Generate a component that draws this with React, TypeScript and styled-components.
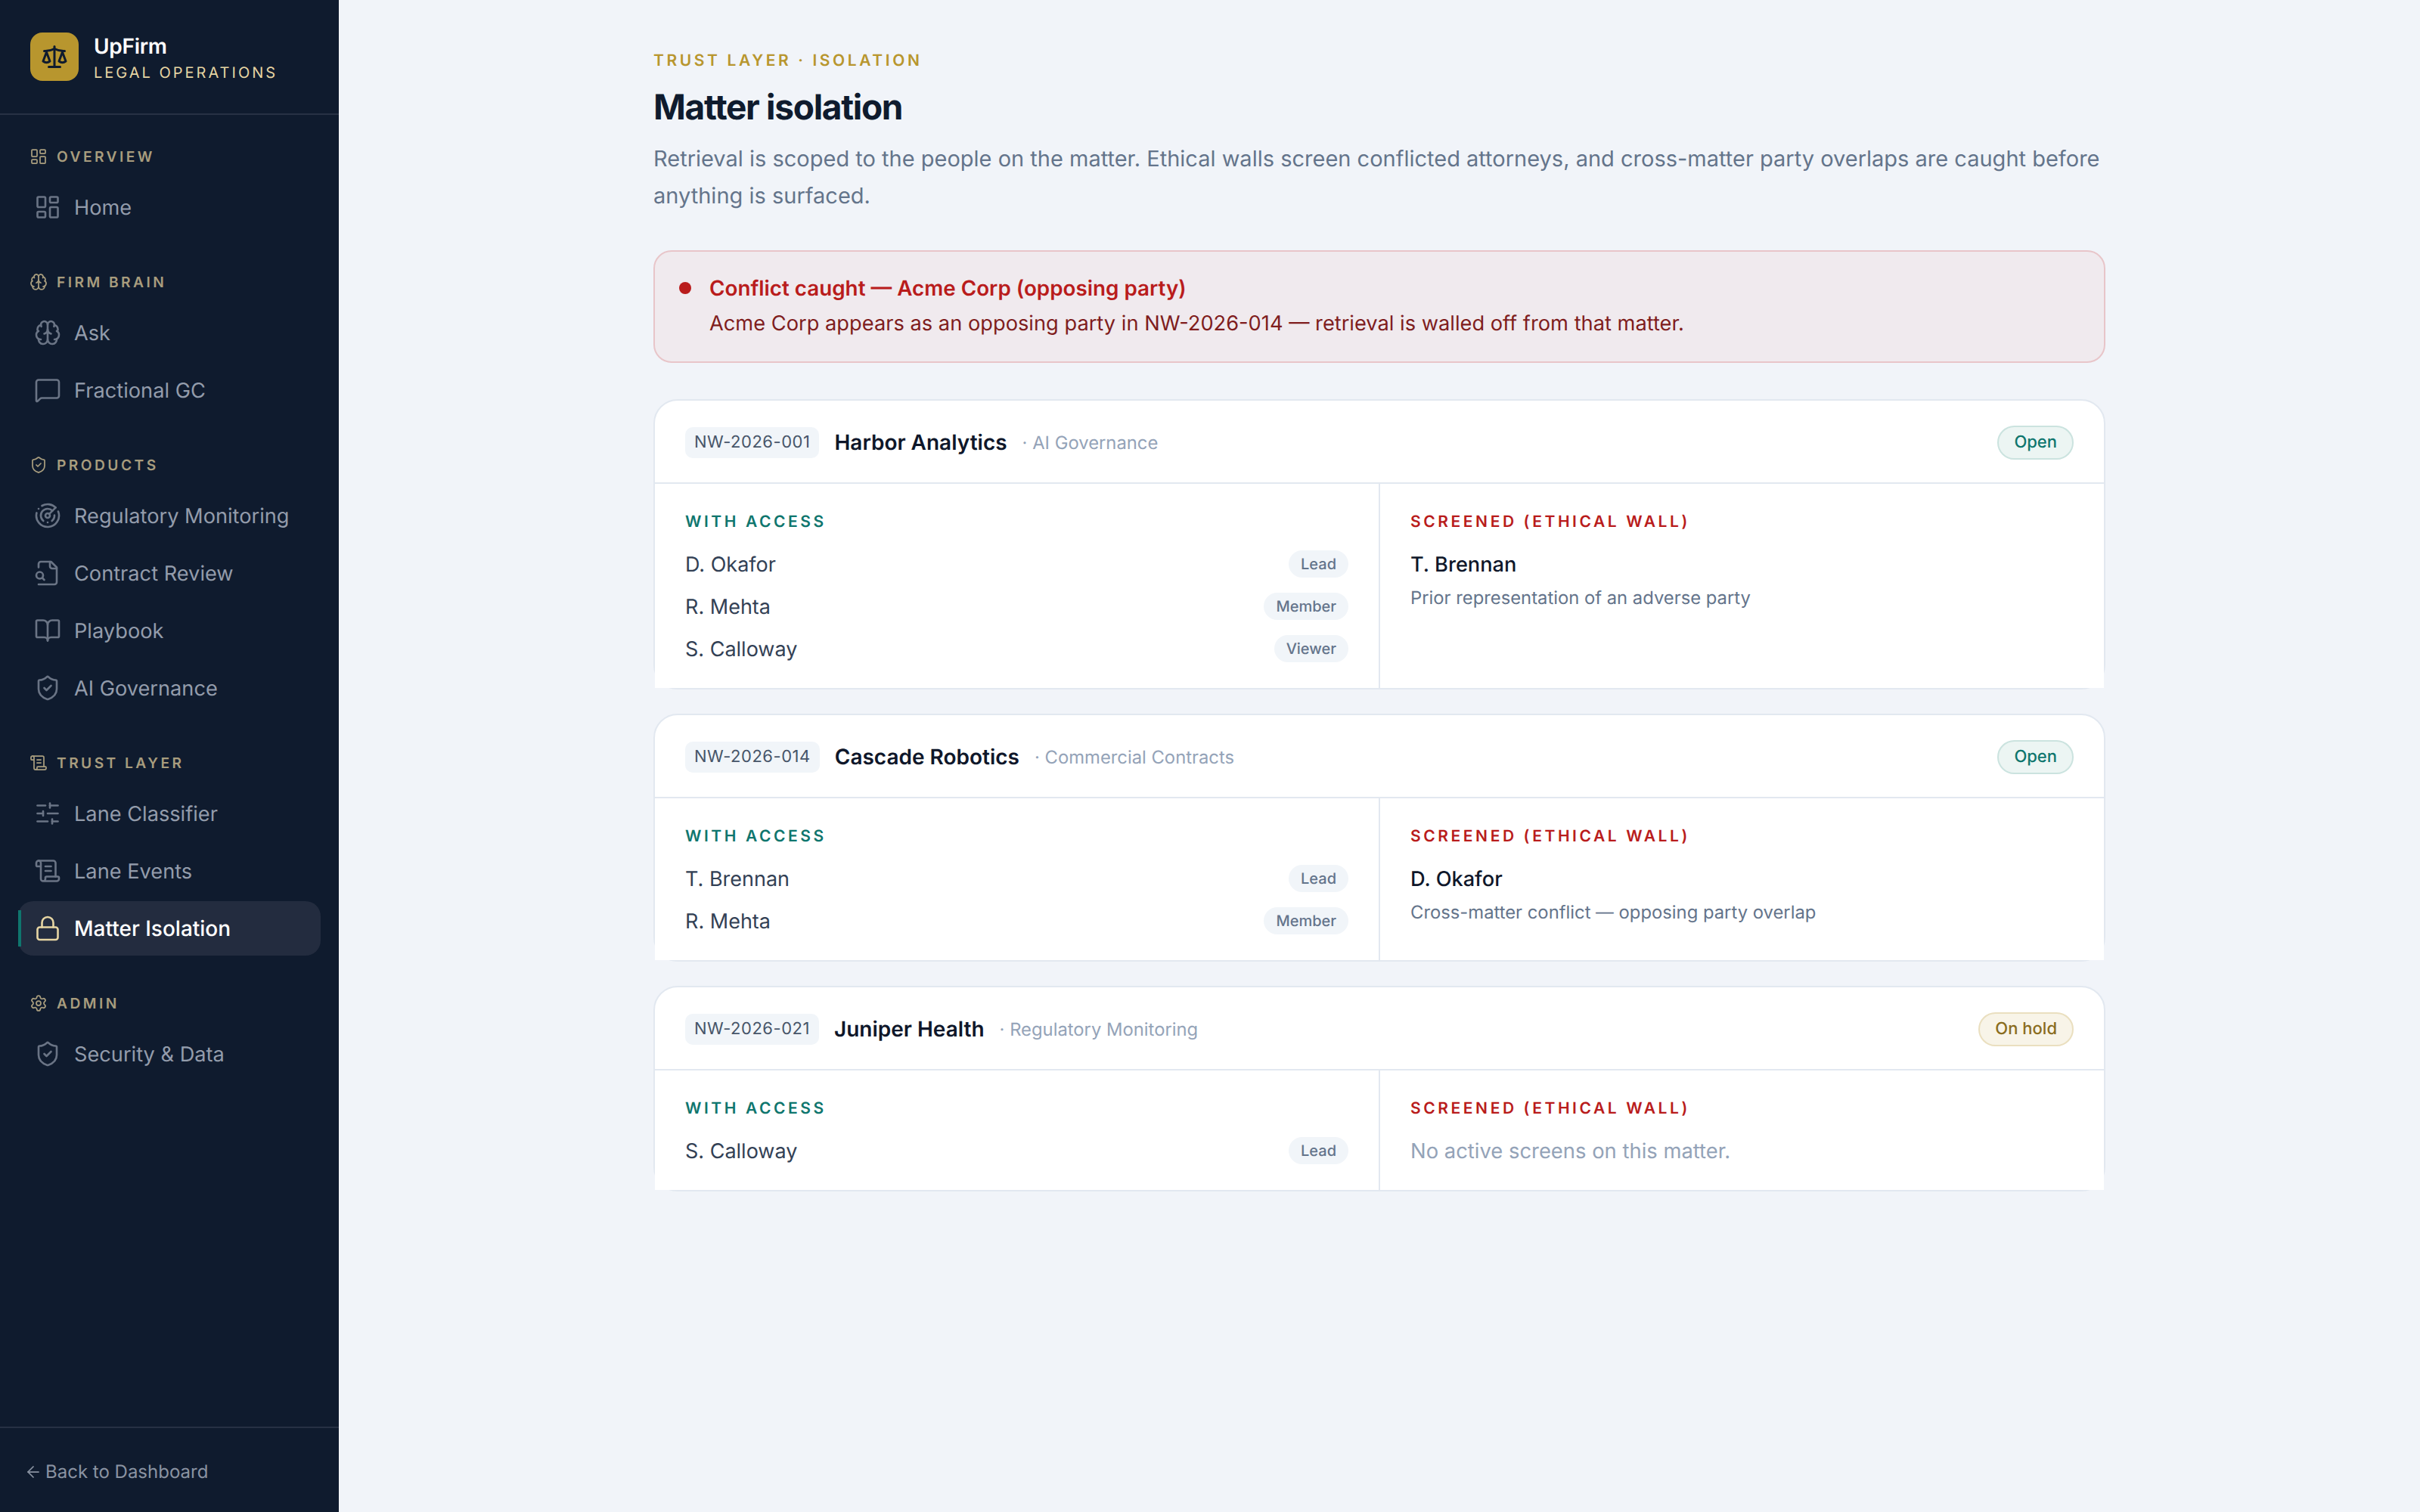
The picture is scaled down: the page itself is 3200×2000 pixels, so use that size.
import React from "react";
import styled, { createGlobalStyle } from "styled-components";
import {
  ArrowLeft,
  BookOpen,
  Brain,
  LayoutDashboard,
  Lock,
  MessageSquare,
  Radar,
  Scale,
  ScrollText,
  Settings,
  ShieldCheck,
  SlidersHorizontal,
} from "lucide-react";

const Global = createGlobalStyle`
  html, body { margin: 0; padding: 0; background: #f1f4f9; }
  body {
    font-family: Inter, "Liberation Sans", sans-serif;
    text-rendering: geometricPrecision;
    -webkit-font-smoothing: antialiased;
  }
  * { box-sizing: border-box; }
`;

const Shell = styled.div`
  display: flex;
  width: 3200px;
  height: 2000px;
  overflow: hidden;
`;

const Sidebar = styled.aside`
  width: 448px;
  flex: none;
  display: flex;
  flex-direction: column;
  background: #0f1b2e;
`;

const Brand = styled.div`
  height: 152px;
  display: flex;
  align-items: flex-start;
  gap: 20px;
  padding: 43px 40px 0;
  border-bottom: 2px solid #273144;
`;

const LogoMark = styled.div`
  width: 64px;
  height: 64px;
  flex: none;
  display: flex;
  align-items: center;
  justify-content: center;
  border-radius: 16px;
  background: #b8962e;
  color: #0f1b2e;
`;

const BrandText = styled.div`
  display: flex;
  flex-direction: column;
  padding-top: 1px;
`;

const BrandName = styled.div`
  font-size: 28px;
  line-height: 34px;
  font-weight: 600;
  color: #ffffff;
  letter-spacing: -0.28px;
`;

const BrandSub = styled.div`
  margin-top: 5px;
  font-size: 20px;
  line-height: 26px;
  letter-spacing: 3px;
  color: #e6d5a3;
`;

const Nav = styled.nav`
  flex: 1;
  display: flex;
  flex-direction: column;
  gap: 48px;
  padding: 40px 24px 0;
`;

const NavSection = styled.section`
  display: flex;
  flex-direction: column;
  gap: 4px;
`;

const SectionLabel = styled.div`
  height: 42px;
  padding: 0 0 12px 15px;
  display: flex;
  align-items: center;
  gap: 12px;
  font-size: 19.2px;
  font-weight: 600;
  letter-spacing: 3.46px;
  color: #a89d7e;
`;

const NavItem = styled.a<{ $active?: boolean }>`
  position: relative;
  height: 72px;
  display: flex;
  align-items: center;
  gap: 17px;
  padding-left: 21px;
  border-radius: 20px;
  font-size: ${(p) => (p.$active ? "28px" : "27.2px")};
  font-weight: ${(p) => (p.$active ? 500 : 400)};
  color: ${(p) => (p.$active ? "#ffffff" : "#939cab")};
  background: ${(p) => (p.$active ? "#232c3f" : "transparent")};

  svg {
    color: ${(p) => (p.$active ? "#e6d5a3" : "#6a7485")};
    flex: none;
  }
`;

const ActiveBar = styled.span`
  position: absolute;
  left: 0;
  top: 12px;
  width: 4px;
  height: 48px;
  background: #0f766e;
`;

const SidebarFoot = styled.div`
  height: 113px;
  border-top: 2px solid #273144;
  display: flex;
  align-items: center;
  gap: 4px;
  padding: 4px 0 0 32px;
  font-size: 24px;
  color: #8a93a2;
`;

const Main = styled.main`
  flex: 1;
  display: flex;
  justify-content: center;
  padding-top: 65px;
`;

const Content = styled.div`
  width: 1920px;
  display: flex;
  flex-direction: column;
`;

const Eyebrow = styled.div`
  font-size: 21px;
  line-height: 32px;
  font-weight: 600;
  letter-spacing: 3.6px;
  color: #b8962e;
`;

const Title = styled.h1`
  margin: 17px 0 0;
  font-size: 46px;
  line-height: 56px;
  font-weight: 700;
  letter-spacing: -1.3px;
  color: #0f1b2e;
`;

const Lead = styled.p`
  margin: 15px 0 0;
  font-size: 29px;
  line-height: 49px;
  color: #64748b;
`;

const Alert = styled.div`
  margin-top: 48px;
  height: 149px;
  display: flex;
  gap: 24px;
  padding: 28px 32px;
  border: 2px solid #e8c5c9;
  border-radius: 24px;
  background: #f0eaee;
`;

const AlertDot = styled.span`
  width: 16px;
  height: 16px;
  margin-top: 12px;
  flex: none;
  border-radius: 50%;
  background: #b91c1c;
`;

const AlertText = styled.div`
  display: flex;
  flex-direction: column;
  gap: 7px;
`;

const AlertTitle = styled.div`
  font-size: 27.8px;
  line-height: 40px;
  font-weight: 600;
  color: #b91c1c;
`;

const AlertBody = styled.div`
  font-size: 27.25px;
  line-height: 40px;
  color: #7f1d1d;
`;

const Cards = styled.div`
  margin-top: 48px;
  display: flex;
  flex-direction: column;
  gap: 32px;
`;

const Card = styled.article`
  border: 2px solid #e2e8f0;
  border-radius: 32px;
  background: #ffffff;
`;

const CardHead = styled.header`
  height: 110px;
  display: flex;
  align-items: center;
  padding: 2px 40px 0;
  border-bottom: 2px solid #e2e8f0;
`;

const MatterId = styled.span`
  height: 41px;
  display: flex;
  align-items: center;
  padding: 0 12px;
  border-radius: 10px;
  background: #f1f5f9;
  font-size: 22px;
  letter-spacing: 0.52px;
  color: #475569;
`;

const MatterName = styled.span`
  margin-left: 20px;
  font-size: 28px;
  font-weight: 600;
  color: #0f172a;
`;

const MatterArea = styled.span`
  margin-left: 20px;
  font-size: 23.8px;
  color: #94a3b8;
`;

const Status = styled.span<{ $hold?: boolean }>`
  margin-left: auto;
  height: 45px;
  display: flex;
  align-items: center;
  padding: 0 20px;
  border-radius: 999px;
  border: 2px solid ${(p) => (p.$hold ? "#eadfbf" : "#cbe3df")};
  background: ${(p) => (p.$hold ? "#f8f4e8" : "#ecf5f3")};
  color: ${(p) => (p.$hold ? "#8a6d1f" : "#0f766e")};
  font-size: 22px;
  font-weight: 500;
`;

const CardBody = styled.div`
  display: grid;
  grid-template-columns: 1fr 1fr;
  gap: 2px;
  background: #e2e8f0;
`;

const Col = styled.div`
  padding: 36px 40px 24px;
  background: #ffffff;
`;

const ColLabel = styled.div<{ $danger?: boolean }>`
  font-size: 21px;
  line-height: 30px;
  font-weight: 600;
  letter-spacing: 3.57px;
  color: ${(p) => (p.$danger ? "#b91c1c" : "#0f766e")};
  margin-bottom: 12px;
`;

const Person = styled.div`
  height: 56px;
  display: flex;
  align-items: center;
  justify-content: space-between;
  font-size: 27px;
  color: #334155;
`;

const Role = styled.span`
  height: 36px;
  display: flex;
  align-items: center;
  padding: 0 16px;
  border-radius: 999px;
  background: #f1f5f9;
  font-size: 20px;
  font-weight: 500;
  color: #64748b;
`;

const ScreenedName = styled.div`
  height: 56px;
  display: flex;
  align-items: center;
  font-size: 27.2px;
  font-weight: 500;
  color: #0f172a;
`;

const ScreenedReason = styled.div`
  margin-top: -1px;
  font-size: 23.8px;
  line-height: 36px;
  color: #64748b;
`;

const NoScreens = styled.div`
  height: 56px;
  display: flex;
  align-items: center;
  font-size: 27.4px;
  color: #94a3b8;
`;

type IconProps = { size?: number; strokeWidth?: number };

const FileSearchLeft = ({ size = 24, strokeWidth = 2 }: IconProps) => (
  <svg
    width={size}
    height={size}
    viewBox="0 0 24 24"
    fill="none"
    stroke="currentColor"
    strokeWidth={strokeWidth}
    strokeLinecap="round"
    strokeLinejoin="round"
  >
    <path d="M4 22h14a2 2 0 0 0 2-2V7l-5-5H6a2 2 0 0 0-2 2v3" />
    <path d="M14 2v4a2 2 0 0 0 2 2h4" />
    <circle cx="5" cy="14" r="3" />
    <path d="m9 18-1.5-1.5" />
  </svg>
);

type Item = { label: string; Icon: React.ComponentType<any>; active?: boolean };
type Group = { label: string; Icon: React.ComponentType<any>; items: Item[] };

const groups: Group[] = [
  { label: "OVERVIEW", Icon: LayoutDashboard, items: [{ label: "Home", Icon: LayoutDashboard }] },
  {
    label: "FIRM BRAIN",
    Icon: Brain,
    items: [
      { label: "Ask", Icon: Brain },
      { label: "Fractional GC", Icon: MessageSquare },
    ],
  },
  {
    label: "PRODUCTS",
    Icon: ShieldCheck,
    items: [
      { label: "Regulatory Monitoring", Icon: Radar },
      { label: "Contract Review", Icon: FileSearchLeft },
      { label: "Playbook", Icon: BookOpen },
      { label: "AI Governance", Icon: ShieldCheck },
    ],
  },
  {
    label: "TRUST LAYER",
    Icon: ScrollText,
    items: [
      { label: "Lane Classifier", Icon: SlidersHorizontal },
      { label: "Lane Events", Icon: ScrollText },
      { label: "Matter Isolation", Icon: Lock, active: true },
    ],
  },
  { label: "ADMIN", Icon: Settings, items: [{ label: "Security & Data", Icon: ShieldCheck }] },
];

type Matter = {
  id: string;
  name: string;
  area: string;
  status: string;
  hold?: boolean;
  people: [string, string][];
  screened?: { name: string; reason: string };
};

const matters: Matter[] = [
  {
    id: "NW-2026-001",
    name: "Harbor Analytics",
    area: "· AI Governance",
    status: "Open",
    people: [
      ["D. Okafor", "Lead"],
      ["R. Mehta", "Member"],
      ["S. Calloway", "Viewer"],
    ],
    screened: { name: "T. Brennan", reason: "Prior representation of an adverse party" },
  },
  {
    id: "NW-2026-014",
    name: "Cascade Robotics",
    area: "· Commercial Contracts",
    status: "Open",
    people: [
      ["T. Brennan", "Lead"],
      ["R. Mehta", "Member"],
    ],
    screened: { name: "D. Okafor", reason: "Cross-matter conflict — opposing party overlap" },
  },
  {
    id: "NW-2026-021",
    name: "Juniper Health",
    area: "· Regulatory Monitoring",
    status: "On hold",
    hold: true,
    people: [["S. Calloway", "Lead"]],
  },
];

export default function App() {
  return (
    <Shell>
      <Global />
      <Sidebar>
        <Brand>
          <LogoMark>
            <Scale size={36} strokeWidth={2} />
          </LogoMark>
          <BrandText>
            <BrandName>UpFirm</BrandName>
            <BrandSub>LEGAL OPERATIONS</BrandSub>
          </BrandText>
        </Brand>
        <Nav>
          {groups.map((g) => (
            <NavSection key={g.label}>
              <SectionLabel>
                <g.Icon size={24} strokeWidth={1.75} />
                {g.label}
              </SectionLabel>
              {g.items.map((it) => (
                <NavItem key={it.label} $active={it.active}>
                  {it.active && <ActiveBar />}
                  <it.Icon size={36} strokeWidth={1.75} />
                  {it.label}
                </NavItem>
              ))}
            </NavSection>
          ))}
        </Nav>
        <SidebarFoot>
          <ArrowLeft size={24} strokeWidth={1.75} />
          Back to Dashboard
        </SidebarFoot>
      </Sidebar>
      <Main>
        <Content>
          <Eyebrow>TRUST LAYER · ISOLATION</Eyebrow>
          <Title>Matter isolation</Title>
          <Lead>
            Retrieval is scoped to the people on the matter. Ethical walls screen conflicted attorneys, and
            cross-matter party overlaps are caught before anything is surfaced.
          </Lead>
          <Alert>
            <AlertDot />
            <AlertText>
              <AlertTitle>Conflict caught — Acme Corp (opposing party)</AlertTitle>
              <AlertBody>
                Acme Corp appears as an opposing party in NW-2026-014 — retrieval is walled off from that matter.
              </AlertBody>
            </AlertText>
          </Alert>
          <Cards>
            {matters.map((m) => (
              <Card key={m.id}>
                <CardHead>
                  <MatterId>{m.id}</MatterId>
                  <MatterName>{m.name}</MatterName>
                  <MatterArea>{m.area}</MatterArea>
                  <Status $hold={m.hold}>{m.status}</Status>
                </CardHead>
                <CardBody>
                  <Col>
                    <ColLabel>WITH ACCESS</ColLabel>
                    {m.people.map(([name, role]) => (
                      <Person key={name}>
                        {name}
                        <Role>{role}</Role>
                      </Person>
                    ))}
                  </Col>
                  <Col>
                    <ColLabel $danger>SCREENED (ETHICAL WALL)</ColLabel>
                    {m.screened ? (
                      <>
                        <ScreenedName>{m.screened.name}</ScreenedName>
                        <ScreenedReason>{m.screened.reason}</ScreenedReason>
                      </>
                    ) : (
                      <NoScreens>No active screens on this matter.</NoScreens>
                    )}
                  </Col>
                </CardBody>
              </Card>
            ))}
          </Cards>
        </Content>
      </Main>
    </Shell>
  );
}
